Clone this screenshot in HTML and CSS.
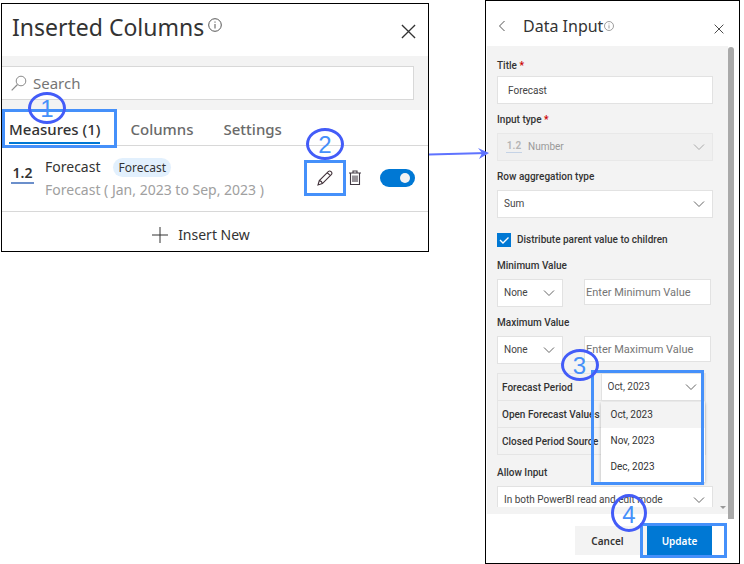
FILE: index.html
```html
<!DOCTYPE html>
<html lang="en">
<head>
<meta charset="utf-8">
<title>Inserted Columns</title>
<link rel="stylesheet" href="styles.css">
</head>
<body>
<svg class="symbols" aria-hidden="true">
  <symbol id="chevron" viewBox="0 0 12 8"><path d="M1 1.5 6 6.5 11 1.5" fill="none" stroke="currentColor"/></symbol>
  <symbol id="close" viewBox="0 0 16 16"><path d="M1 1 15 15M15 1 1 15" fill="none" stroke="currentColor" stroke-width="1.4"/></symbol>
  <symbol id="info" viewBox="0 0 14 14"><circle cx="7" cy="7" r="6.3" fill="none" stroke="currentColor"/><path d="M7 6v4.5M7 3.5v1.2" stroke="currentColor"/></symbol>
</svg>
<div class="page">
  <section class="card columns-card">
    <header class="card-head">
      <h1>Inserted Columns</h1>
      <svg class="info"><use href="#info"/></svg>
      <button class="icon-button close" aria-label="Close"><svg><use href="#close"/></svg></button>
    </header>
    <div class="search-band">
      <label class="search">
        <svg viewBox="0 0 16 16"><circle cx="10" cy="6" r="4.8" fill="none" stroke="#8a8a8a"/><path d="M6.5 9.5.7 15.3" stroke="#8a8a8a" stroke-width="1.2"/></svg>
        <input type="text" placeholder="Search" aria-label="Search">
      </label>
    </div>
    <nav class="tabs">
      <a href="#measures" class="tab active">Measures (1)</a>
      <a href="#columns" class="tab">Columns</a>
      <a href="#settings" class="tab">Settings</a>
      <span class="frame frame-tab"></span>
      <span class="step step-one">1</span>
    </nav>
    <div class="measure">
      <span class="number-type">1.2</span>
      <div class="measure-text">
        <div class="measure-name">Forecast <span class="tag">Forecast</span></div>
        <div class="measure-range">Forecast ( Jan, 2023 to Sep, 2023 )</div>
      </div>
      <div class="actions">
        <div class="edit">
          <button class="icon-button" aria-label="Edit"><svg viewBox="0 0 16 16" width="16" height="16"><path d="M1 15 2.3 10.6 11.5 1.4Q12.8.4 14.1 1.7 15.5 3.1 14.5 4.4L5.4 13.6ZM2.3 10.6Q4.9 11 5.4 13.6M10.3 2.7 13.3 5.7" fill="none" stroke="#42323a" stroke-width="1.1"/></svg></button>
          <span class="frame frame-edit"></span>
          <span class="step step-two">2</span>
        </div>
        <button class="icon-button trash" aria-label="Delete"><svg viewBox="0 0 12 16" width="12" height="16"><path d="M0 3h12M4 3V1h4v2M1.5 3v11.5h9V3M4 5.5v6.5M6 5.5v6.5M8 5.5v6.5" fill="none" stroke="#403842" stroke-width="1.1"/></svg></button>
        <input class="toggle" type="checkbox" checked aria-label="Show Forecast">
      </div>
    </div>
    <button class="insert"><svg viewBox="0 0 16 16" width="16" height="16"><path d="M8 0v16M0 8h16" stroke="#333"/></svg>Insert New</button>
  </section>

  <svg class="arrow" viewBox="0 0 60 14"><path d="M0 7.5 58 6" fill="none" stroke="#5f73ff" stroke-width="2"/><path d="M49 1 60 6 50 12 53 6Z" fill="#5f73ff"/></svg>

  <section class="card input-card">
    <header class="input-head">
      <button class="icon-button back" aria-label="Back"><svg viewBox="0 0 8 12" width="8" height="12"><path d="M6.5 1 1.5 6 6.5 11" fill="none" stroke="#555"/></svg></button>
      <h2>Data Input</h2>
      <svg class="info"><use href="#info"/></svg>
      <button class="icon-button close" aria-label="Close"><svg><use href="#close"/></svg></button>
    </header>
    <div class="body">
      <form class="form" id="measure-form">
        <label class="title" for="title">Title <b>*</b></label>
        <input class="box indent" id="title" type="text" value="Forecast">
        <label class="title" for="type">Input type <b>*</b></label>
        <div class="select disabled">
          <span class="number-type">1.2</span>
          <select class="box" id="type" disabled><option>Number</option></select>
          <svg><use href="#chevron"/></svg>
        </div>
        <label class="title" for="aggregation">Row aggregation type</label>
        <div class="select"><select class="box" id="aggregation"><option>Sum</option></select><svg><use href="#chevron"/></svg></div>
        <label class="check"><input type="checkbox" checked><svg viewBox="0 0 14 14"><path d="M3 7 6 10 11.5 4.5" fill="none" stroke="#fff" stroke-width="1.4"/></svg>Distribute parent value to children</label>
        <label class="title" for="minimum">Minimum Value</label>
        <div class="limit">
          <div class="select"><select class="box" aria-label="Minimum rule"><option>None</option></select><svg><use href="#chevron"/></svg></div>
          <input class="box" id="minimum" type="text" placeholder="Enter Minimum Value">
        </div>
        <label class="title" for="maximum">Maximum Value</label>
        <div class="limit">
          <div class="select"><select class="box" aria-label="Maximum rule"><option>None</option></select><svg><use href="#chevron"/></svg></div>
          <input class="box" id="maximum" type="text" placeholder="Enter Maximum Value">
        </div>
        <div class="forecast">
          <label for="period">Forecast Period</label>
          <div class="period">
            <div class="select"><select class="box" id="period"><option>Oct, 2023</option></select><svg><use href="#chevron"/></svg></div>
            <ul class="menu" role="listbox" aria-label="Forecast Period">
              <li role="option" aria-selected="true">Oct, 2023</li>
              <li role="option">Nov, 2023</li>
              <li role="option">Dec, 2023</li>
            </ul>
            <span class="frame frame-period"></span>
            <span class="step step-three">3</span>
          </div>
          <span class="cell">Open Forecast Values</span><span class="cell"></span>
          <span class="cell">Closed Period Source</span><span class="cell"></span>
        </div>
        <label class="title" for="allow">Allow Input</label>
        <div class="select cut"><select class="box" id="allow"><option>In both PowerBI read and edit mode</option></select><svg><use href="#chevron"/></svg></div>
      </form>
      <span class="scrollbar"></span>
      <span class="scroll-arrow"></span>
    </div>
    <footer>
      <button class="button">Cancel</button>
      <div class="update">
        <button class="button primary">Update</button>
        <span class="frame frame-update"></span>
        <span class="step step-four">4</span>
      </div>
    </footer>
  </section>
</div>
</body>
</html>
```
FILE: styles.css
```css
* { box-sizing: border-box; }
body { margin: 0; background: #fff; color: #333; font: 14px/20px "Noto Sans", sans-serif; }
input, select, button { font: inherit; letter-spacing: inherit; color: inherit; margin: 0; }
h1, h2 { margin: 0; font-weight: 400; }
.symbols { position: absolute; width: 0; height: 0; }
.page { display: grid; grid-template-columns: minmax(0, 428fr) 56px minmax(0, 255fr); align-items: start; padding: 0 4px 0 1px; }
.card { border: 1px solid #000; background: #fff; }
.columns-card { margin-top: 3px; }
.icon-button { display: flex; padding: 0; border: 0; background: none; }

.card-head { display: flex; align-items: flex-start; height: 52px; padding: 7px 12px 0 10px; }
h1 { font-size: 23px; line-height: 32px; }
.card-head .info { width: 14px; height: 14px; margin: 7px 0 0 4px; color: #555; }
.card-head .close { margin: 13px 0 0 auto; }
.card-head .close svg { width: 15px; height: 15px; }

.search-band { padding: 10px 14px 10px 0; background: #f3f3f3; }
.search { display: flex; align-items: center; gap: 6px; height: 34px; padding-left: 9px; border: 1px solid #d8d8d8; border-left: 0; background: #fff; }
.search svg { width: 16px; height: 16px; }
.search input { flex: 1; min-width: 0; padding: 0; border: 0; outline: 0; font-size: 15px; }
input::placeholder { color: #757575; opacity: 1; }

.tabs { position: relative; display: flex; gap: 30px; height: 36px; padding: 0 7px; border-bottom: 1px solid #d8d8d8; font-size: 15px; font-weight: 500; }
.tab { color: #6a6a6a; text-decoration: none; line-height: 39px; height: 34px; }
.tab.active { color: #333; border-bottom: 2px solid #0078d4; }

.frame { position: absolute; border: 3px solid #4590fa; pointer-events: none; }
.step { position: absolute; width: 38px; height: 32px; border: 3px solid #435cf8; border-radius: 50%; color: #4590fa; font: 24px/28px "Liberation Sans", sans-serif; text-align: center; pointer-events: none; }
.frame-tab { left: 0; top: -1px; width: 115px; height: 39px; }
.step-one { left: 26px; top: -18px; }
.frame-edit { left: 0; top: 0; width: 100%; height: 100%; }
.step-two { left: 2px; top: -32px; }
.frame-period { inset: -3px 1px -85px -10px; }
.step-three { left: -40px; top: -24px; }
.frame-update { inset: -3px -15px -3px -7px; }
.step-four { left: -36px; top: -32px; width: 36px; height: 38px; line-height: 36px; }

.measure { display: flex; height: 66px; padding: 10px 13px 0 9px; border-bottom: 1px solid #d8d8d8; }
.number-type { width: 23px; height: 22px; border-bottom: 2px solid #6b8fcb; font-weight: 600; text-align: center; line-height: 22px; }
.measure > .number-type { margin-top: 6px; }
.measure-text { flex: 1; margin-left: 11px; white-space: nowrap; }
.measure-name { display: flex; align-items: center; gap: 13px; height: 22px; }
.tag { padding: 0 5px; border-radius: 10px; background: #e2f0fd; font-size: 12px; line-height: 19px; }
.measure-range { line-height: 24px; color: #a0a0a0; }
.actions { display: flex; align-items: center; height: 46px; margin-top: -1px; }
.edit { position: relative; display: flex; align-items: center; justify-content: center; width: 42px; height: 36px; }
.trash { margin: 0 19px 0 3px; }
.toggle { position: relative; appearance: none; width: 35px; height: 18px; border-radius: 9px; background: #0078d4; }
.toggle::after { content: ""; position: absolute; right: 5px; top: 4px; width: 10px; height: 10px; border-radius: 50%; background: #f3f3f3; }
.insert { display: flex; align-items: center; justify-content: center; gap: 10px; width: 100%; height: 39px; padding: 6px 28px 0 0; border: 0; background: none; }
.arrow { width: 60px; height: 14px; margin-top: 147px; z-index: 1; }

.input-card { min-width: 0; font: 10px/14px Roboto, "Noto Sans", sans-serif; }
.input-head { display: flex; align-items: center; height: 45px; padding: 5px 15px 0 12px; }
h2 { margin-left: 17px; font: 16px/24px "Noto Sans", sans-serif; white-space: nowrap; }
.input-head .info { width: 10px; height: 10px; margin-left: 1px; color: #777; }
.input-head .close { margin: 6px 0 0 auto; }
.input-head .close svg { width: 10px; height: 10px; }
.body { position: relative; margin-left: 1px; padding: 13px 5px 7px 0; }
.body::before { content: ""; position: absolute; inset: 0 11px 0 0; background: #f3f3f3; }
.form { position: relative; display: flex; flex-direction: column; padding: 0 21px 0 10px; }
.scrollbar { position: absolute; right: 5px; top: 1px; bottom: -5px; width: 6px; border-radius: 3px 3px 0 0; background: #a9a9a9; }
.scroll-arrow { position: absolute; right: 13px; bottom: 5px; border: 3px solid transparent; border-top-color: #999; border-bottom: 0; }
.title { display: block; margin-bottom: 6px; font-weight: 500; height: 14px; }
.title:first-child { margin-bottom: 3px; }
.title b { color: #c00; }
.box { width: 100%; min-width: 0; height: 28px; padding: 0 6px; border: 1px solid #e2e2e2; border-radius: 0; background: #fff; outline: 0; appearance: none; color: #444; opacity: 1; }
.box.indent { padding-left: 10px; }
.form > .box, .form > .select { margin-bottom: 9px; }
.select { position: relative; }
.select svg { position: absolute; right: 8px; top: 10px; width: 12px; height: 8px; color: #666; pointer-events: none; }
.disabled .box { background: #f0f0f0; border-color: #e8e8e8; padding-left: 30px; color: #999; }
.disabled .number-type { position: absolute; left: 9px; top: 6px; width: 16px; height: 14px; border-bottom: 1px solid #c5d3e6; color: #b5b5b5; line-height: 13px; }
.disabled svg { color: #aaa; }
.check { position: relative; display: flex; align-items: center; gap: 6px; margin: 6px 0 12px; font-weight: 500; }
.check input { appearance: none; width: 14px; height: 14px; background: #0078d4; }
.check svg { position: absolute; left: 0; width: 14px; height: 14px; }
.limit { display: grid; grid-template-columns: 66px minmax(0, 1fr); gap: 21px; margin: 0 2px 9px 0; }
.limit > .box { height: 26px; padding: 0 1px; font-size: 11px; }
.forecast { display: grid; grid-template-columns: minmax(0, 1fr) minmax(0, 1fr); margin: 0 7px 11px 0; border: 1px solid #e5e5e5; border-top: 0; font-weight: 500; }
.forecast > label, .cell { height: 27px; padding-left: 4px; border-top: 1px solid #e5e5e5; line-height: 28px; white-space: nowrap; }
.period { position: relative; z-index: 2; height: 27px; margin-left: -1px; font-weight: 400; }
.menu { position: absolute; z-index: 1; left: 0; right: 0; top: 29px; margin: 0; padding: 0 0 2px; list-style: none; background: #fff; box-shadow: 0 1px 3px #0004; }
.menu li { padding-left: 10px; line-height: 26px; }
.menu li[aria-selected] { background: #f3f3f3; }
.frame-period, .step-three { z-index: 2; }
.cut { height: 21px; overflow: hidden; }
.form > .cut { margin-bottom: 0; }
footer { display: flex; justify-content: flex-end; padding: 12px 27px 8px; }
.button { width: 72px; height: 29px; padding: 0 7px 0 0; border: 0; background: #f3f3f3; font: 600 10px/14px "Noto Sans", sans-serif; }
.update { position: relative; z-index: 3; }
.primary { width: 65px; padding: 0; background: #0078d4; color: #fff; }
```
